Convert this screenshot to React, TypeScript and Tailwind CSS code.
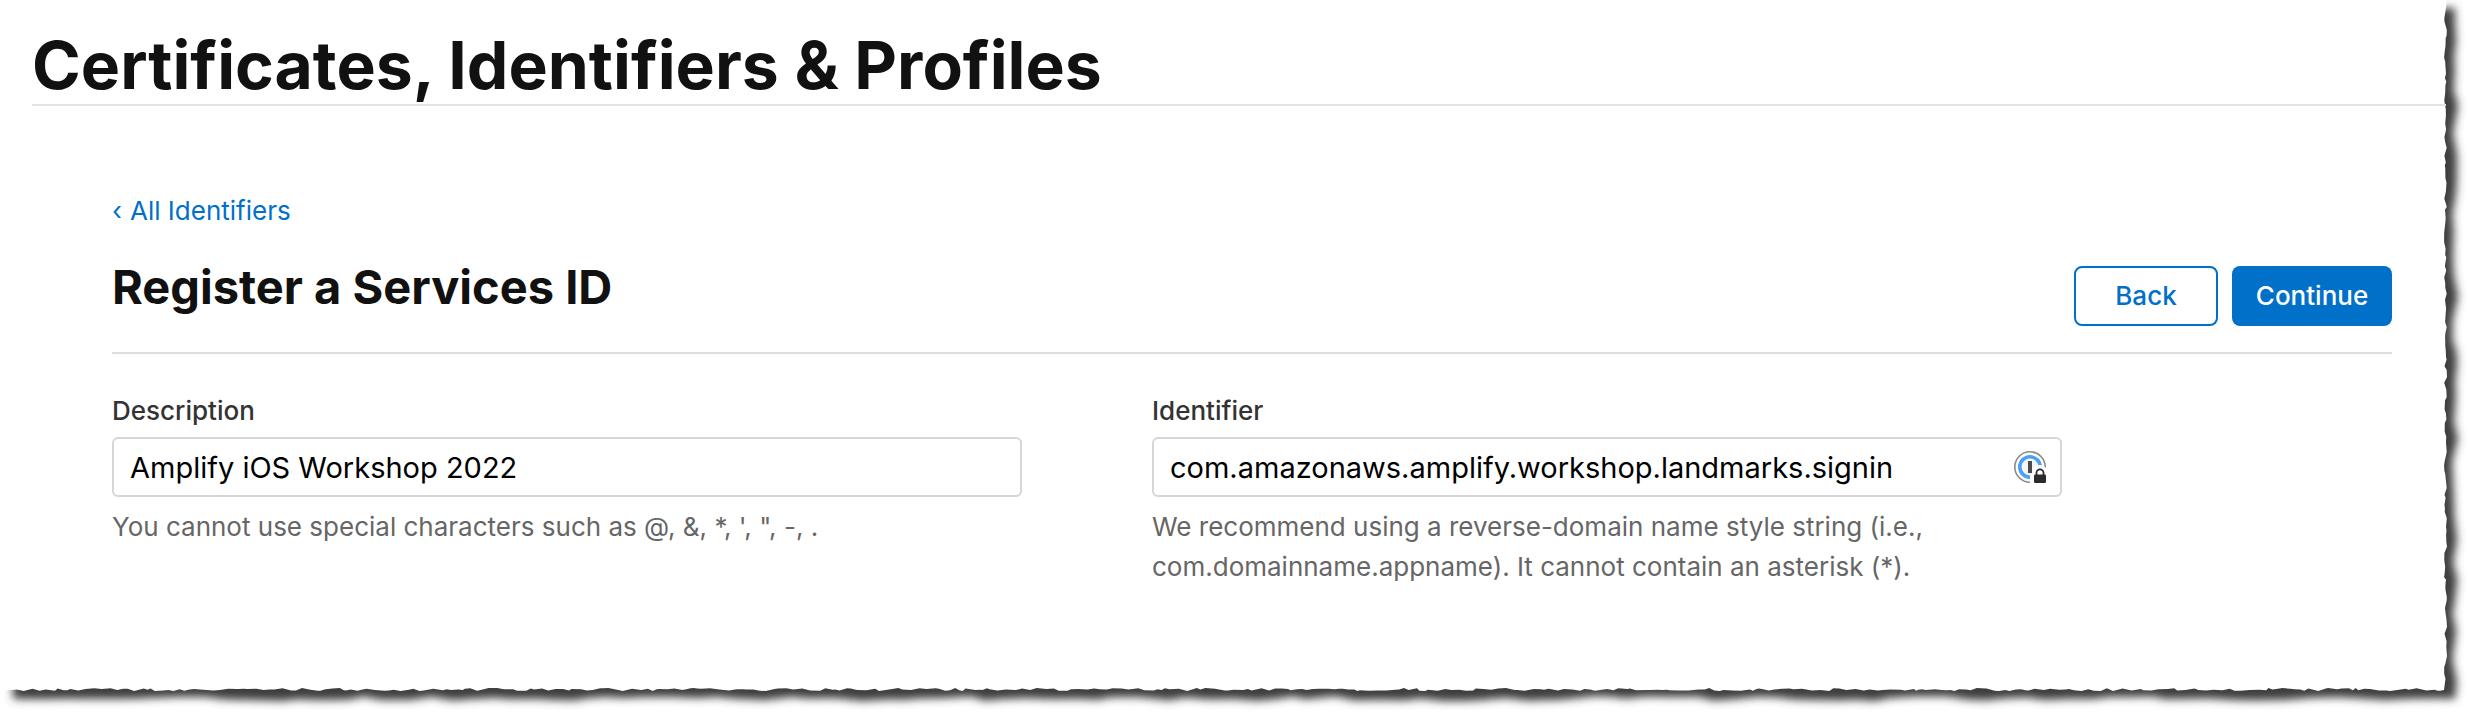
const PAPER_W = 2468;
const PAPER_H = 712;

function createRandom(seed: number) {
  let state = seed;
  return () => {
    state = (state * 1103515245 + 12345) % 2147483648;
    return state / 2147483648;
  };
}

// Outline of the sheet: straight top and left sides, ragged right and bottom sides.
function tornOutline() {
  const random = createRandom(29);
  const right = 2446;
  const bottom = 690;
  const points: string[] = ["0,0", `${right},0`];
  for (let y = 3; y < bottom - 4; y += 2 + random() * 7) {
    points.push(`${(right - 2 + random() * 3).toFixed(1)},${y.toFixed(1)}`);
  }
  points.push(`${right - 2},${bottom}`);
  for (let x = right - 6; x > 2; x -= 2 + random() * 8) {
    points.push(`${x.toFixed(1)},${(bottom - 2 + random() * 3).toFixed(1)}`);
  }
  points.push(`0,${bottom - 1}`);
  return points.join(" ");
}

// Outline of the shadow, with slower waves than the sheet's own edge.
function shadowOutline() {
  const random = createRandom(71);
  const right = 2455;
  const bottom = 699;
  const points: string[] = ["13,600", "2380,600", "2380,8", `${right},8`];
  for (let y = 20; y < bottom - 14; y += 12 + random() * 16) {
    points.push(`${(right - 3 + random() * 6).toFixed(1)},${y.toFixed(1)}`);
  }
  points.push(`${right},${bottom}`);
  for (let x = right - 14; x > 24; x -= 12 + random() * 18) {
    points.push(`${x.toFixed(1)},${(bottom - 3 + random() * 5).toFixed(1)}`);
  }
  points.push(`13,${bottom}`);
  return points.join(" ");
}

const SHEET = tornOutline();
const SHADOW = shadowOutline();

function TornPaper() {
  return (
    <svg
      aria-hidden="true"
      className="absolute inset-0 h-full w-full"
      viewBox={`0 0 ${PAPER_W} ${PAPER_H}`}
      preserveAspectRatio="none"
    >
      <defs>
        <filter id="soft" filterUnits="userSpaceOnUse" x="0" y="0" width={PAPER_W} height={PAPER_H}>
          <feGaussianBlur stdDeviation="4.2" />
        </filter>
      </defs>
      <polygon points={SHADOW} fill="#3c3c3c" filter="url(#soft)" />
      <polygon points={SHEET} fill="#ffffff" />
    </svg>
  );
}

function PasswordManagerIcon() {
  return (
    <svg aria-hidden="true" className="h-8 w-8" viewBox="0 0 32 32">
      <circle cx="16" cy="16" r="15.2" fill="#fff" stroke="#8a8a8a" strokeWidth="1.6" />
      <circle cx="16" cy="16" r="10.2" fill="#f5f5f5" stroke="#4a9ff8" strokeWidth="3.6" />
      <rect x="14" y="10" width="4" height="12" fill="#4a4a4a" />
      <path d="M16 32V24.500L19 22V18.500a7 7 0 0 1 7-4.500q3 0 5 2L32 17.500V32Z" fill="#fff" />
      <rect x="20" y="23.500" width="12" height="8.500" rx="1.300" fill="#2b2b2b" />
      <path d="M22.500 24v-2.200a3.500 3.500 0 0 1 7 0V24" fill="none" stroke="#2b2b2b" strokeWidth="1.800" />
    </svg>
  );
}

const inputClass =
  "h-[60px] w-full rounded-md border-2 border-[#d6d6d6] bg-white pl-4 text-[29px] text-black outline-none";
const labelClass = "text-[26px] leading-[40px] font-medium text-[#333333]";
const helpClass = "mt-2.5 text-[26px] leading-[40px] text-[#666666]";

export default function App() {
  return (
    <div className="relative min-h-screen overflow-hidden bg-white font-['Inter',sans-serif] text-[#111111]">
      <TornPaper />
      <div className="relative pr-[22px] pb-16">
        <header className="ml-8 border-b-2 border-[#e3e3e3] pt-[26px]">
          <h1 className="text-[66px] leading-[78px] font-bold">Certificates, Identifiers &amp; Profiles</h1>
        </header>
        <main className="mr-[54px] ml-28 pt-[85px]">
          <a href="#identifiers" className="flex items-center gap-2 text-[26px] leading-[40px] text-[#0070c9]">
            <span>‹</span>
            <span>All Identifiers</span>
          </a>
          <div className="flex items-start justify-between border-b-2 border-[#dddddd] pt-[28px] pb-[26px]">
            <h2 className="text-[47px] leading-[56px] font-bold">Register a Services ID</h2>
            <div className="mt-[7px] flex gap-[14px]">
              <button
                type="button"
                className="h-[60px] w-36 rounded-lg border-2 border-[#0070c9] bg-white pb-0.5 text-[26px] font-medium text-[#0070c9]"
              >
                Back
              </button>
              <button
                type="button"
                className="h-[60px] w-40 rounded-lg bg-[#0070c9] pb-0.5 text-[26px] font-medium text-white"
              >
                Continue
              </button>
            </div>
          </div>
          <form className="grid grid-cols-[91fr_91fr_20fr] gap-x-[130px] pt-[37px]">
            <div className="flex flex-col">
              <label htmlFor="description" className={labelClass}>
                Description
              </label>
              <div className="mt-[6px]">
                <input id="description" type="text" defaultValue="Amplify iOS Workshop 2022" className={inputClass} />
              </div>
              <p className={helpClass}>You cannot use special characters such as @, &amp;, *, ', ", -, .</p>
            </div>
            <div className="flex flex-col">
              <label htmlFor="identifier" className={labelClass}>
                Identifier
              </label>
              <div className="relative mt-[6px]">
                <input
                  id="identifier"
                  type="text"
                  defaultValue="com.amazonaws.amplify.workshop.landmarks.signin"
                  className={inputClass}
                />
                <span className="absolute top-[14px] right-4">
                  <PasswordManagerIcon />
                </span>
              </div>
              <p className={helpClass}>
                We recommend using a reverse-domain name style string (i.e., com.domainname.appname). It cannot contain
                an asterisk (*).
              </p>
            </div>
          </form>
        </main>
      </div>
    </div>
  );
}
